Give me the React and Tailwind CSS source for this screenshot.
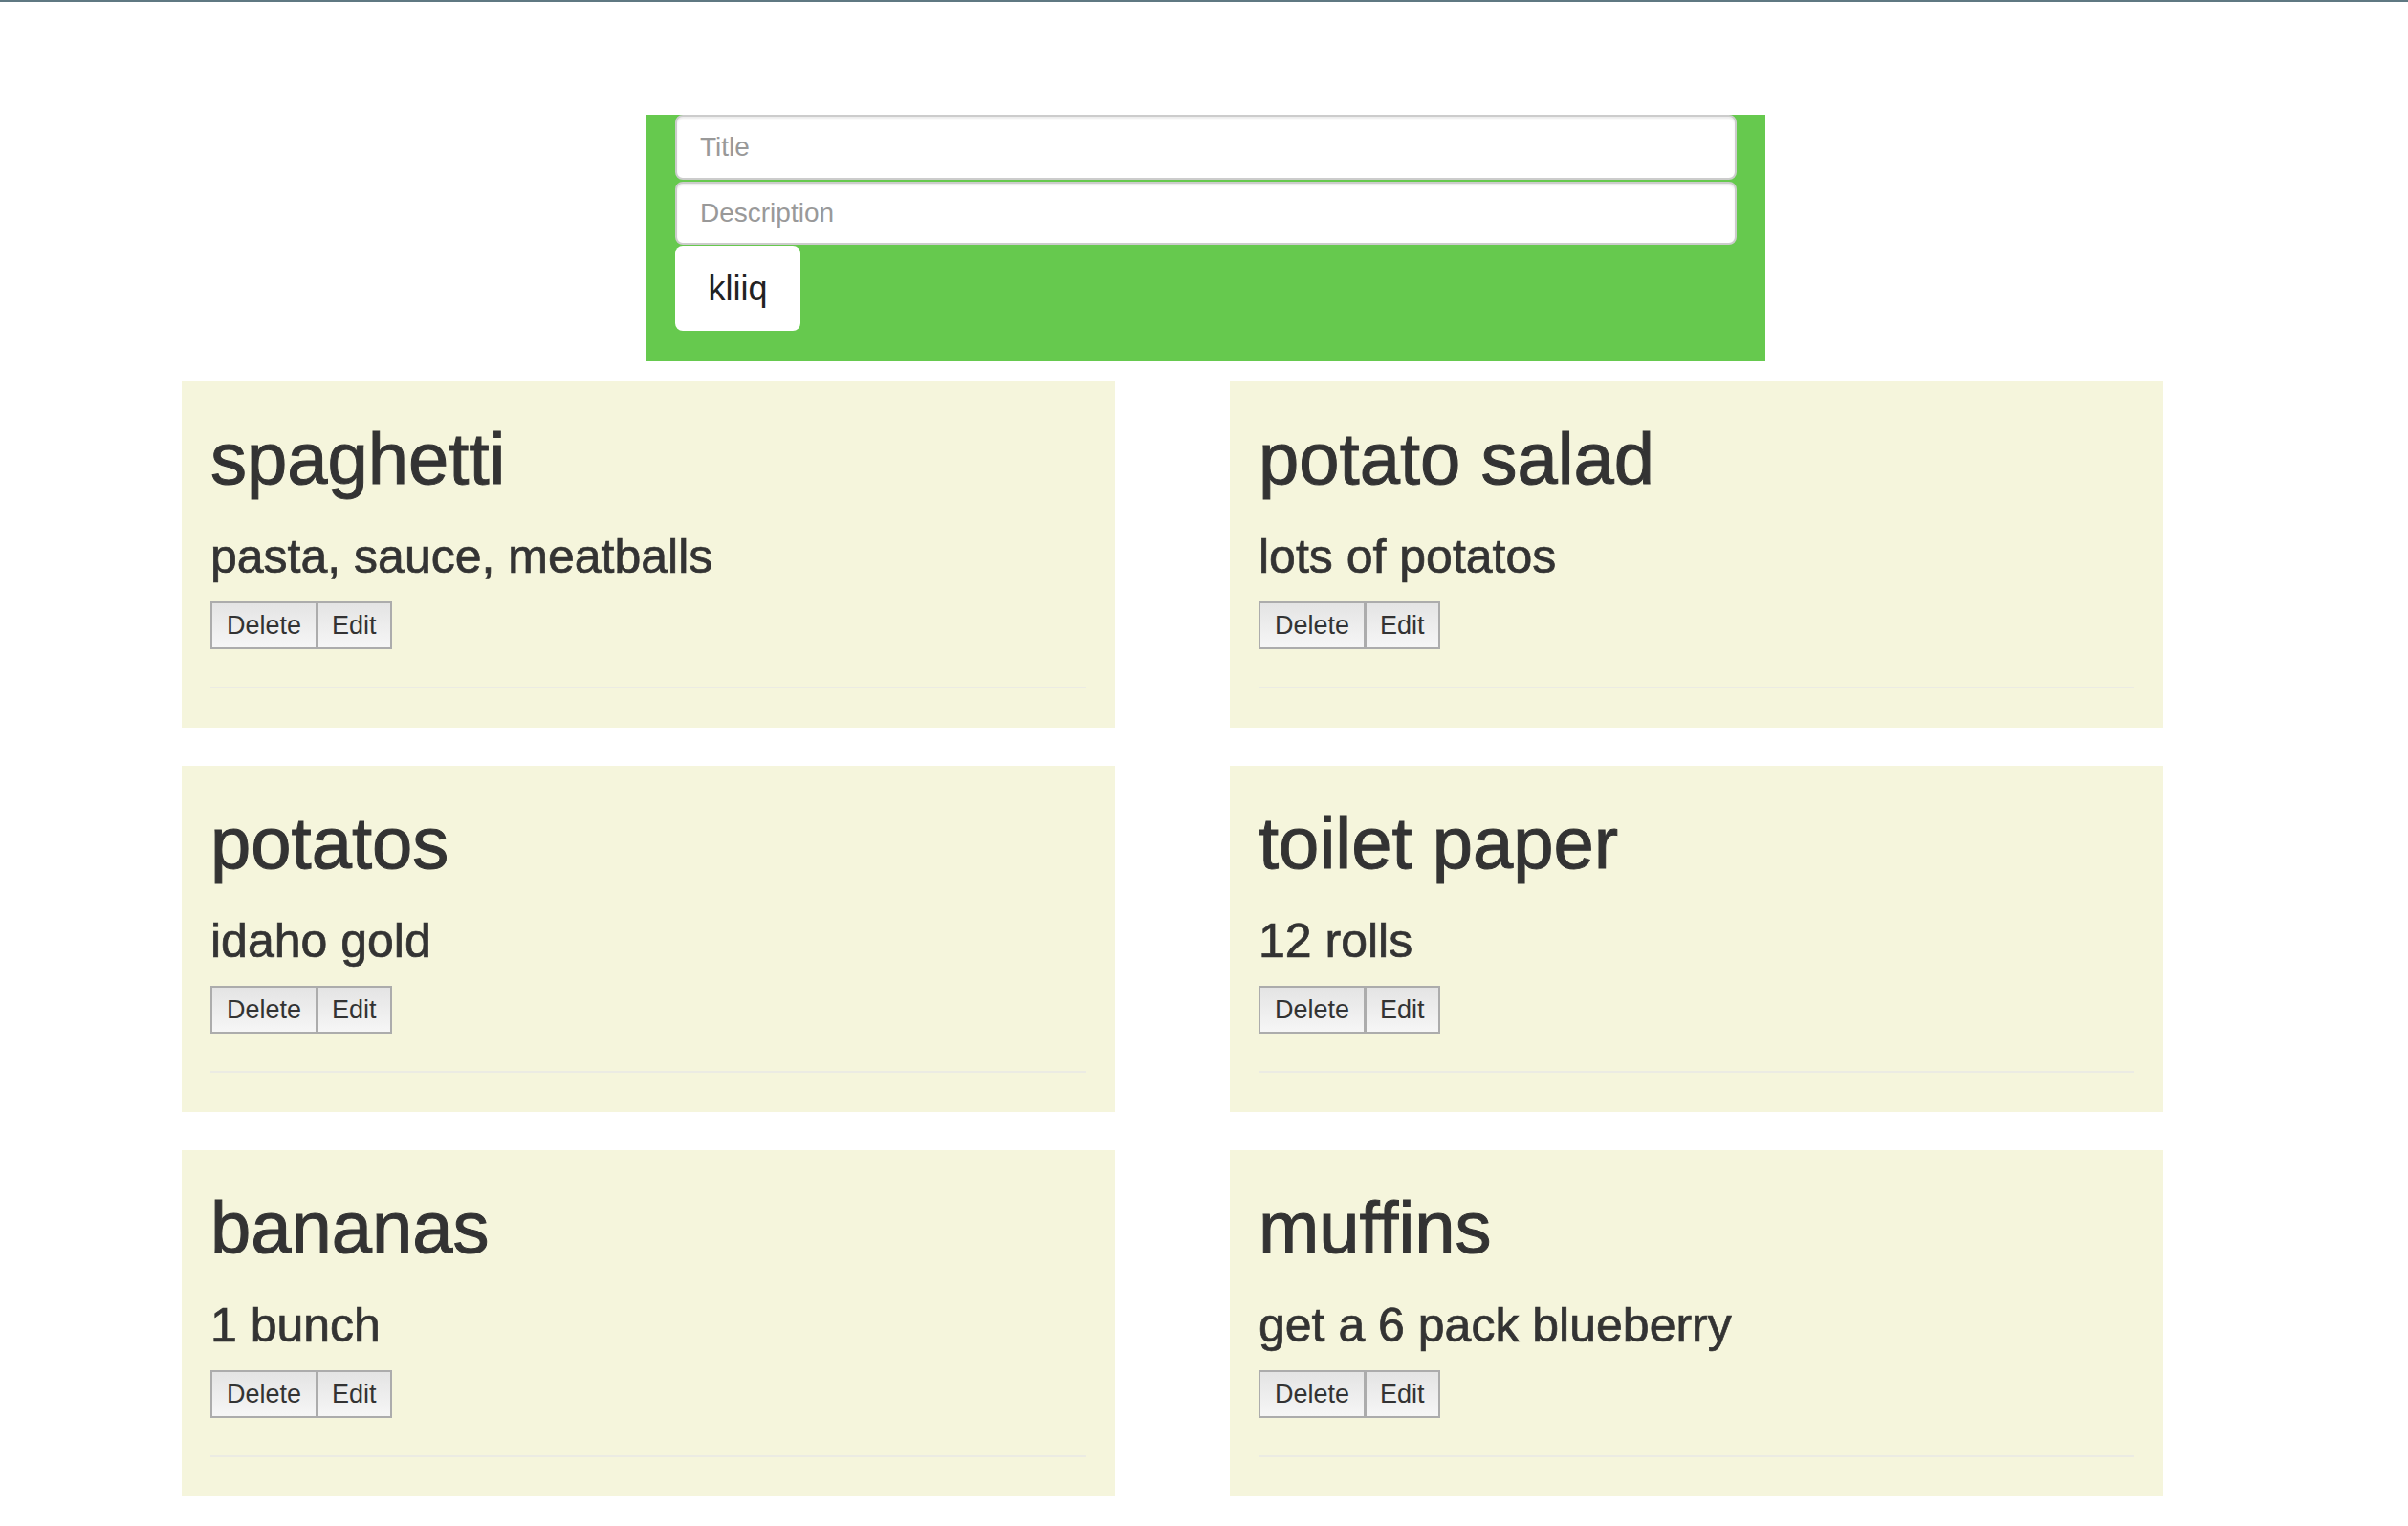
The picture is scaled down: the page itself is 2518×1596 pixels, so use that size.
const items = [
  { title: "spaghetti", desc: "pasta, sauce, meatballs" },
  { title: "potato salad", desc: "lots of potatos" },
  { title: "potatos", desc: "idaho gold" },
  { title: "toilet paper", desc: "12 rolls" },
  { title: "bananas", desc: "1 bunch" },
  { title: "muffins", desc: "get a 6 pack blueberry" },
];

function ItemCard({ title, desc }) {
  return (
    <div className="bg-[#f5f5dc] px-[30px] pt-[39px] pb-[41px]">
      <h1 className="text-[76px] leading-[84px] font-medium [-webkit-text-stroke:1px_#333]">{title}</h1>
      <h3 className="mt-[33px] text-[50px] leading-[55px] font-medium [-webkit-text-stroke:0.7px_#333]">{desc}</h3>
      <div className="mt-[19px] flex">
        <button className="h-[50px] px-[15px] text-[27px] leading-[46px] border-2 border-[#acacac] bg-gradient-to-b from-[#e4e4e4] to-[#f6f6f6] text-[#333]">
          Delete
        </button>
        <button className="h-[50px] px-[14px] ml-[-1px] text-[27px] leading-[46px] border-2 border-[#acacac] bg-gradient-to-b from-[#e4e4e4] to-[#f6f6f6] text-[#333]">
          Edit
        </button>
      </div>
      <hr className="mt-[39px] border-0 h-[2px] bg-[#ebebe3]" />
    </div>
  );
}

export default function App() {
  return (
    <div
      className="min-h-screen bg-white text-[#333]"
      style={{ fontFamily: '"Liberation Sans", Arial, sans-serif' }}
    >
      <div className="h-[2px] bg-[#5f7882]" />

      {/* add form */}
      <div className="ml-[676px] mt-[118px] w-[1170px] h-[258px] bg-[#66c94e] px-[30px]">
        <div className="flex flex-col gap-[2px]">
          <input
            placeholder="Title"
            className="h-[68px] w-full rounded-[8px] border-2 border-[#cccccc] bg-white px-[24px] text-[28px] placeholder-[#999] outline-none shadow-[inset_0_2px_2px_rgba(0,0,0,0.08)]"
          />
          <input
            placeholder="Description"
            className="h-[66px] w-full rounded-[8px] border-2 border-[#cccccc] bg-white px-[24px] text-[28px] placeholder-[#999] outline-none shadow-[inset_0_2px_2px_rgba(0,0,0,0.08)]"
          />
        </div>
        <button className="mt-[1px] h-[89px] w-[131px] rounded-[8px] bg-white text-[36px] text-[#222]">
          kliiq
        </button>
      </div>

      <div className="ml-[190px] mt-[21px] grid w-[2072px] grid-cols-2 gap-x-[120px] gap-y-[40px] pb-[40px]">
        {items.map((it) => (
          <ItemCard key={it.title} {...it} />
        ))}
      </div>
    </div>
  );
}
